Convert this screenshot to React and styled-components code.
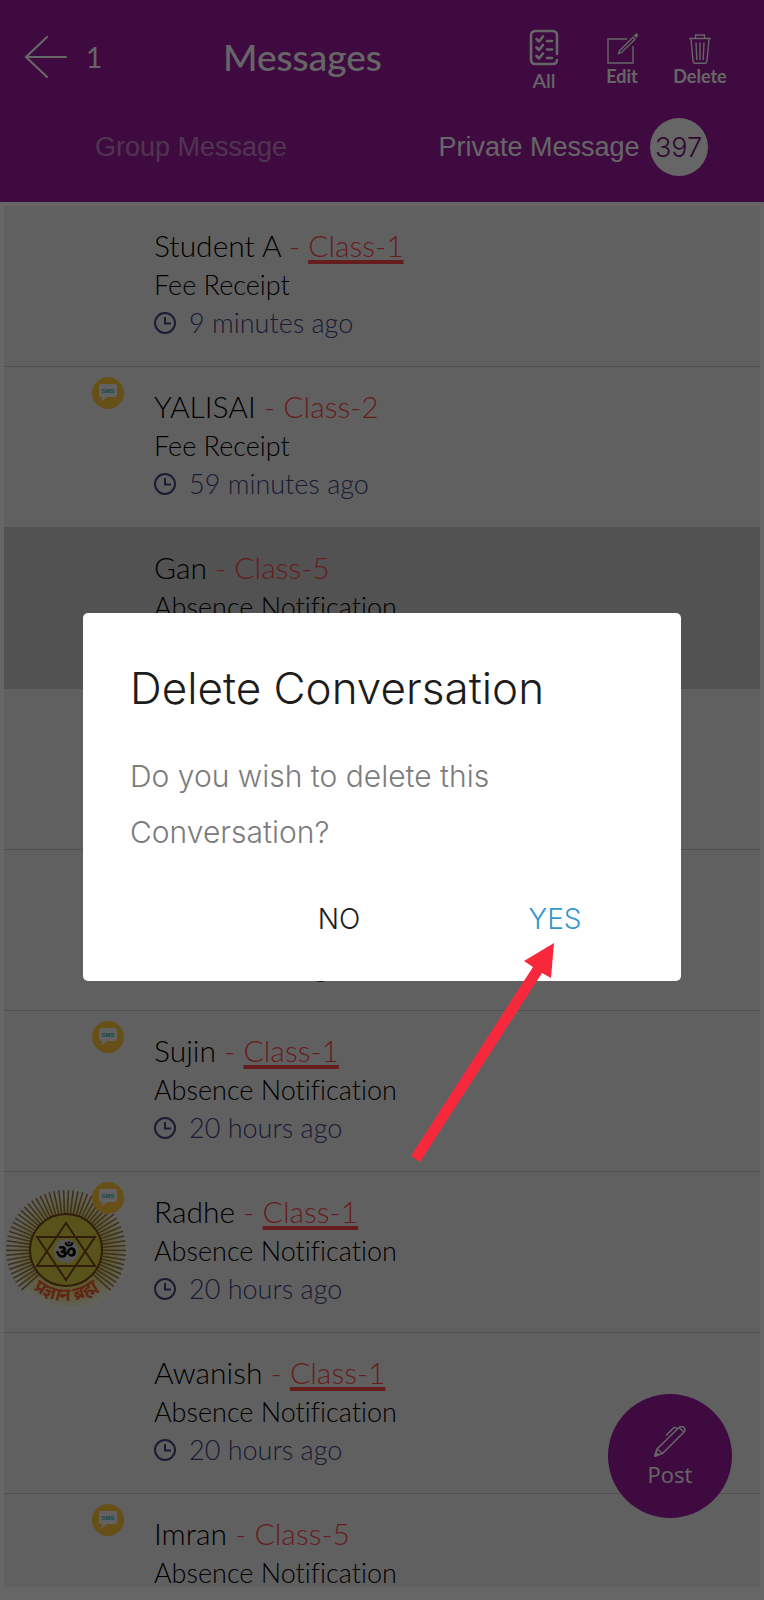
import React from 'react';
import styled, { createGlobalStyle } from 'styled-components';

const GlobalStyle = createGlobalStyle`
    * {
        box-sizing: border-box;
    }
    body {
        margin: 0;
        background: #fff;
        font-family: Lato, "Open Sans", sans-serif;
        font-variant-ligatures: none;
    }
    button {
        border: 0;
        padding: 0;
        background: none;
        font: inherit;
        color: inherit;
        cursor: pointer;
    }
`;

const Page = styled.div`
    height: 100vh;
    display: flex;
    flex-direction: column;
    overflow: hidden;
`;

const Header = styled.header`
    flex: none;
    background: #9b19a0;
    color: #fff;
    padding-bottom: 25px;
`;
const Toolbar = styled.div`
    height: 113px;
    padding: 0 25px 0 24px;
    display: flex;
    align-items: center;
`;
const BackGroup = styled.div`
    width: 199px;
    display: flex;
    align-items: center;
    gap: 18px;
    font-size: 28px;
`;
const BackButton = styled.button`
    display: flex;
`;
const Title = styled.h1`
    flex: 1;
    margin: 0;
    font-size: 37px;
    font-weight: 500;
`;
const Actions = styled.div`
    display: grid;
    grid-template-columns: repeat(3, 78px);
    align-items: center;
    padding-top: 6px;
`;
const Action = styled.button`
    display: flex;
    flex-direction: column;
    align-items: center;
    gap: ${props => props.$large ? '3px' : '0'};
    font-size: ${props => props.$large ? '20px' : '18px'};
    line-height: 22px;
    font-weight: ${props => props.$large ? 500 : 700};
`;

const Tabs = styled.nav`
    height: 60px;
    margin-top: 4px;
    display: grid;
    grid-template-columns: 1fr 1fr;
    font-family: "Liberation Sans", Arial, sans-serif;
    font-size: 27px;
`;
const Tab = styled.button`
    display: flex;
    align-items: center;
    justify-content: center;
    gap: 10px;
    opacity: ${props => props.$active ? 1 : 0.45};
`;
const Count = styled.span`
    width: 58px;
    height: 58px;
    border-radius: 50%;
    display: flex;
    align-items: center;
    justify-content: center;
    background: #fff;
    color: #7a1480;
    font-family: Inter, sans-serif;
    font-weight: 300;
`;

const List = styled.ul`
    flex: 1;
    min-height: 0;
    overflow: hidden;
    margin: 4px 4px 13px;
    padding: 0;
    list-style: none;
    background: #f1f1f1;
`;
const Row = styled.li`
    height: 161px;
    display: flex;
    gap: 24px;
    border-bottom: 1px solid #c8c8c8;
    background: ${props => props.$selected ? '#cdcdcd' : 'transparent'};
`;
const AvatarSlot = styled.div`
    position: relative;
    flex: none;
    width: 126px;
    padding-top: 14px;
`;
const SmsBadge = styled.svg`
    position: absolute;
    top: 10px;
    left: 88px;
`;
const RowText = styled.div`
    flex: 1;
    min-width: 0;
    display: flex;
    flex-direction: column;
    justify-content: flex-end;
    padding-bottom: 24px;
    color: #000;
    font-size: 27px;
    line-height: 38px;
    font-weight: 300;
`;
const Name = styled.div`
    font-size: 30px;
    line-height: 42px;
`;
const ClassName = styled.span`
    color: #ff4a4a;
`;
const ClassLink = styled.a`
    color: #ff4a4a;
    text-decoration: underline;
    text-decoration-thickness: 4px;
    text-underline-offset: 3px;
    text-decoration-skip-ink: none;
`;
const Subject = styled.div`
    color: #000;
`;
const Time = styled.div`
    display: flex;
    align-items: center;
    gap: 13px;
    color: #3f4680;
`;

const PostButton = styled.button`
    && {
        position: fixed;
        right: 32px;
        bottom: 82px;
        width: 124px;
        height: 124px;
        border-radius: 50%;
        display: flex;
        flex-direction: column;
        align-items: center;
        justify-content: center;
        gap: 3px;
        background: #9b19a0;
        color: #fff;
        font-family: "Open Sans", sans-serif;
        font-size: 22px;
        line-height: 28px;
    }
`;

const Scrim = styled.div`
    position: fixed;
    inset: 0;
    display: flex;
    align-items: center;
    padding: 0 83px 6px;
    background: rgba(0, 0, 0, 0.6);
`;
const Dialog = styled.div`
    position: relative;
    flex: 1;
    padding: 47px 18px 36px 47px;
    border-radius: 5px;
    background: #fff;
    font-family: Inter, "Liberation Sans", sans-serif;
    font-weight: 300;
`;
const DialogTitle = styled.h2`
    margin: 0;
    font-size: 44px;
    line-height: 56px;
    font-weight: 300;
    color: #1c1c1c;
`;
const DialogBody = styled.p`
    margin: 32px 100px 33px 0;
    font-size: 30px;
    line-height: 56px;
    color: #7c7c7c;
`;
const DialogActions = styled.div`
    display: flex;
    justify-content: flex-end;
`;
const DialogButton = styled.button`
    && {
        width: 216px;
        font-size: 28px;
        line-height: 52px;
        color: ${props => props.$primary ? '#3596d0' : '#1c1c1c'};
    }
`;
const Pointer = styled.svg`
    position: absolute;
    top: 327px;
    right: 121px;
    pointer-events: none;
`;

const BackIcon = () => (
    <svg width="44" height="44" viewBox="0 0 44 44" fill="none" stroke="currentColor" strokeWidth="2.2" strokeLinecap="round">
        <path d="M23 2 2 22l21 20M2 22h40" />
    </svg>
);

const AllIcon = () => (
    <svg width="30" height="37" viewBox="0 0 30 37" fill="none" stroke="currentColor" strokeWidth="2.6" strokeLinecap="round" strokeLinejoin="round">
        <path d="M28 25V6.500Q28 2 23.500 2H6.500Q2 2 2 6.500V30.500Q2 35 6.500 35H23.500Q28 35 28 31" />
        <path d="M7.500 10l2.500 2.500 4-5M7.500 18.500l2.500 2.500 4-5M7.500 27l2.500 2.500 4-5M18 12h5M18 20.500h5M18 29h5" />
    </svg>
);

const EditIcon = () => (
    <svg width="32" height="32" viewBox="0 0 32 32" fill="none" stroke="currentColor" strokeWidth="1.400">
        <path d="M21 6H2v24h25V13" />
        <path d="M13.500 17.800 27 4.200l2 2L15.500 19.500l-3 1z" />
        <path d="M28.500 2.500l2-1.500 1 1-1 2z" fill="currentColor" />
    </svg>
);

const DeleteIcon = () => (
    <svg width="24" height="32" viewBox="0 0 24 32" fill="none" stroke="currentColor" strokeWidth="1.400">
        <path d="M1 5.500h22M7.500 5V2h9v3M3 6l2 22q.3 2.300 2 2.300h10q1.700 0 2-2.300L21 6" />
        <path d="M8 9.500l.8 17.500M12 9.500V27M16 9.500 15.200 27" />
    </svg>
);

const ClockIcon = () => (
    <svg width="22" height="22" viewBox="0 0 22 22" fill="none" stroke="currentColor" strokeWidth="2">
        <circle cx="11" cy="11" r="10" />
        <path d="M11 5v6.500h6" />
    </svg>
);

const PenIcon = () => (
    <svg width="32" height="32" viewBox="0 0 32 32" fill="none" stroke="currentColor" strokeWidth="1.600" strokeLinejoin="round">
        <path d="M1 31 3 24 25 2.500q3-2 5 0t0 4.500L8.500 28.500z" />
        <path d="M3 24l5.500 4.500M25 2.500l5 4.500M23 3.500q-2-2-4 0l-7 7" />
        <path d="M1 31l1-3.500 2.500 2.500z" fill="currentColor" />
    </svg>
);

const SmsIcon = () => (
    <SmsBadge width="32" height="32" viewBox="0 0 32 32">
        <circle cx="16" cy="16" r="16" fill="#ffc83c" />
        <path d="M9 7h14q2 0 2 2v9q0 2-2 2h-8l-6 5 1.500-5H9q-2 0-2-2V9q0-2 2-2z" fill="#f4f4f4" />
        <text x="16" y="16" textAnchor="middle" fontFamily="Liberation Sans, sans-serif" fontSize="6" fontWeight="700" fill="#2fb5b5">SMS</text>
    </SmsBadge>
);

const RAYS = 58;

const SunAvatar = () => (
    <svg width="126" height="128" viewBox="-1 0 126 128">
        <defs>
            <radialGradient id="glow">
                <stop offset="0.5" stopColor="#e8dc60" />
                <stop offset="0.8" stopColor="#efe8b0" />
                <stop offset="0.950" stopColor="#f6f5ee" />
                <stop offset="1" stopColor="#f1f1f1" />
            </radialGradient>
            <path id="motto" d="M13 81A51 51 0 0 0 109 81" />
        </defs>
        <circle cx="64" cy="66" r="60" fill="url(#glow)" />
        {Array.from({ length: RAYS }, (_, i) => 138 + i * 264 / (RAYS - 1)).map(angle => {
            const a = angle * Math.PI / 180;
            return (
                <path
                    key={angle}
                    d={`M${61 + 36 * Math.cos(a)} ${64 + 36 * Math.sin(a)}L${61 + 60 * Math.cos(a)} ${64 + 60 * Math.sin(a)}`}
                    stroke="#9a7c40"
                    strokeWidth="1.600"
                />
            );
        })}
        <circle cx="61" cy="64" r="36" fill="#ddd044" stroke="#7a4a1a" strokeWidth="2" />
        <path d="M61 37 90 80H32zM61 94 32 51h58z" fill="none" stroke="#7a4a1a" strokeWidth="2" />
        <circle cx="61" cy="65" r="12" fill="#d8d8d8" />
        <text x="61" y="73" textAnchor="middle" fontFamily="Noto Sans, sans-serif" fontSize="21" fontWeight="700" fill="#000">ॐ</text>
        <text fontFamily="Noto Sans, sans-serif" fontSize="18" fontWeight="700" fill="#f06030">
            <textPath href="#motto" startOffset="50%" textAnchor="middle">प्रज्ञान ब्रह्म</textPath>
        </text>
    </svg>
);

const messages = [
    { name: 'Student A', group: 'Class-1', link: true, subject: 'Fee Receipt', time: '9 minutes ago' },
    { name: 'YALISAI', group: 'Class-2', subject: 'Fee Receipt', time: '59 minutes ago', sms: true },
    { name: 'Gan', group: 'Class-5', subject: 'Absence Notification', selected: true },
    {},
    { time: '20 hours ago' },
    { name: 'Sujin', group: 'Class-1', link: true, subject: 'Absence Notification', time: '20 hours ago', sms: true },
    { name: 'Radhe', group: 'Class-1', link: true, subject: 'Absence Notification', time: '20 hours ago', sms: true, avatar: true },
    { name: 'Awanish', group: 'Class-1', link: true, subject: 'Absence Notification', time: '20 hours ago' },
    { name: 'Imran', group: 'Class-5', subject: 'Absence Notification', sms: true },
];

const MessageRow = ({ message }) => (
    <Row $selected={message.selected}>
        <AvatarSlot>
            {message.avatar && <SunAvatar />}
            {message.sms && <SmsIcon />}
        </AvatarSlot>
        <RowText>
            {
                message.name &&
                <Name>
                    {message.name} <ClassName>- </ClassName>
                    {message.link
                        ? <ClassLink href="#class">{message.group}</ClassLink>
                        : <ClassName>{message.group}</ClassName>}
                </Name>
            }
            {message.subject && <Subject>{message.subject}</Subject>}
            {message.time ? <Time><ClockIcon />{message.time}</Time> : <Time>&nbsp;</Time>}
        </RowText>
    </Row>
);

const App = () => {
    return (
        <>
            <GlobalStyle />
            <Page>
                <Header>
                    <Toolbar>
                        <BackGroup>
                            <BackButton aria-label="Back"><BackIcon /></BackButton>
                            <span>1</span>
                        </BackGroup>
                        <Title>Messages</Title>
                        <Actions>
                            <Action $large><AllIcon />All</Action>
                            <Action><EditIcon />Edit</Action>
                            <Action><DeleteIcon />Delete</Action>
                        </Actions>
                    </Toolbar>
                    <Tabs>
                        <Tab>Group Message</Tab>
                        <Tab $active>Private Message <Count>397</Count></Tab>
                    </Tabs>
                </Header>
                <List>
                    {messages.map((message, key) => <MessageRow key={key} message={message} />)}
                </List>
                <PostButton><PenIcon />Post</PostButton>
            </Page>
            <Scrim>
                <Dialog role="dialog" aria-modal="true" aria-labelledby="dialog-title">
                    <DialogTitle id="dialog-title">Delete Conversation</DialogTitle>
                    <DialogBody>Do you wish to delete this Conversation?</DialogBody>
                    <DialogActions>
                        <DialogButton>NO</DialogButton>
                        <DialogButton $primary>YES</DialogButton>
                    </DialogActions>
                    <Pointer width="160" height="225" viewBox="0 0 160 225">
                        <path d="M154 3 151 38 142 33 20 222 11 216 133 27 124 21z" fill="#f8283c" />
                    </Pointer>
                </Dialog>
            </Scrim>
        </>
    );
};

export default App;
